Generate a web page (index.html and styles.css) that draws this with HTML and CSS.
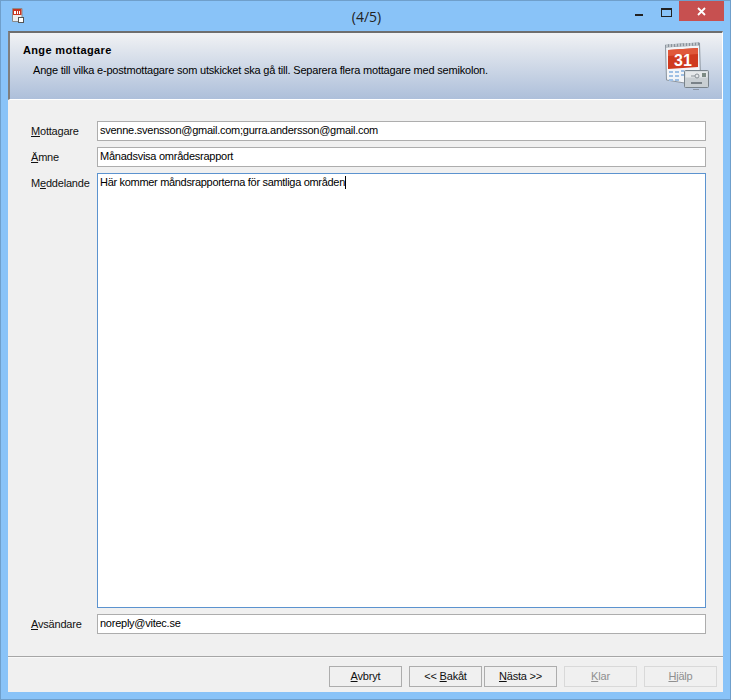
FILE: index.html
```html
<!DOCTYPE html>
<html lang="sv">
<head>
<meta charset="utf-8">
<title>(4/5)</title>
<link rel="stylesheet" href="styles.css">
</head>
<body>
<div class="window">
  <div class="titlebar">
    <svg class="app-icon" width="12" height="16" viewBox="0 0 12 16">
      <path d="M0.500 0.500h9.500v12l-2 1H0.500z" fill="#eceef0" stroke="#8a8a8a"/>
      <rect x="1" y="1" width="8.500" height="6" fill="#c9331f"/>
      <path d="M2 3h2v3H2zM5 3h1v3H5zM7 3h1v3H7z" fill="#fff"/>
      <rect x="6.500" y="9.500" width="5" height="5" fill="#fff" stroke="#555"/>
    </svg>
    <div class="title">(4/5)</div>
    <div class="controls">
      <div class="ctl ctl-min"><span class="min"></span></div>
      <div class="ctl"><span class="max"></span></div>
      <div class="close">
        <svg width="9" height="9" viewBox="0 0 9 9"><path d="M1 1l7 7M8 1L1 8" stroke="#fff" stroke-width="1.800"/></svg>
      </div>
    </div>
  </div>
  <div class="client">
    <header class="banner">
      <div class="banner-text">
        <h1>Ange mottagare</h1>
        <p>Ange till vilka e-postmottagare som utskicket ska gå till. Separera flera mottagare med semikolon.</p>
      </div>
      <svg class="banner-icon" width="46" height="50" viewBox="0 0 46 50">
        <path d="M2.500 4l34-2 1 36-4 6-30-5z" fill="#f3f5f8" stroke="#8b949e"/>
        <path d="M3 3.500l33-2v3L3 6.500z" fill="#8a939c"/>
        <path d="M4 3v3M7 3v3M10 3v3M13 2.500v3M16 2.500v3M19 2.500v3M22 2v3M25 2v3M28 2v3M31 1.500v3M34 1.500v3" stroke="#f4f6f8"/>
        <path d="M5 9l30-2v19L5 28z" fill="#cf3a1f"/>
        <path d="M5 9l30-2v6L5 15z" fill="#e0583a"/>
        <text x="20" y="25" class="cal-num">31</text>
        <g fill="#9fc0e4">
          <rect x="6" y="30" width="4" height="2"/><rect x="12" y="30" width="4" height="2"/><rect x="18" y="29" width="3" height="2"/>
          <rect x="6" y="34" width="4" height="2"/><rect x="12" y="34" width="4" height="2"/><rect x="18" y="33" width="3" height="2"/>
          <rect x="6" y="38" width="4" height="2"/><rect x="12" y="38" width="4" height="2"/>
        </g>
        <rect x="21.500" y="29.500" width="24" height="17" rx="1" fill="#c9cfd3" stroke="#79838b"/>
        <rect x="22.500" y="30.500" width="22" height="6" fill="#e6e9eb"/>
        <rect x="39" y="32" width="4" height="4" fill="#7d8b84"/>
        <circle cx="34" cy="35" r="2" fill="none" stroke="#8a9298"/>
        <path d="M28 35h4" stroke="#8a9298"/>
        <rect x="28" y="41" width="11" height="2" fill="#7a8288"/>
        <rect x="30" y="48" width="6" height="1" fill="#8c97a6"/>
      </svg>
    </header>
    <form class="form">
      <label class="lbl"><u>M</u>ottagare</label>
      <div class="field">svenne.svensson@gmail.com;gurra.andersson@gmail.com</div>
      <label class="lbl"><u>Ä</u>mne</label>
      <div class="field">Månadsvisa områdesrapport</div>
      <label class="lbl">M<u>e</u>ddelande</label>
      <div class="field area">Här kommer måndsrapporterna för samtliga områden<span class="caret"></span></div>
      <label class="lbl"><u>A</u>vsändare</label>
      <div class="field">noreply@vitec.se</div>
    </form>
    <footer class="footer">
      <button type="button" class="btn btn-gap"><u>A</u>vbryt</button>
      <button type="button" class="btn btn-near">&lt;&lt; <u>B</u>akåt</button>
      <button type="button" class="btn btn-gap"><u>N</u>ästa &gt;&gt;</button>
      <button type="button" class="btn btn-gap off" disabled><u>K</u>lar</button>
      <button type="button" class="btn off" disabled><u>H</u>jälp</button>
    </footer>
  </div>
</div>
</body>
</html>
```
FILE: styles.css
```css
* { box-sizing: border-box; }
html, body { margin: 0; padding: 0; }
body { width: 731px; height: 700px; overflow: hidden; font: 11px "Liberation Sans", Arial, sans-serif; color: #000; }
.window { width: 731px; height: 700px; display: flex; flex-direction: column; background: #89c3f8; border: 1px solid #6f9fcb; padding: 0 7px 7px; }
.titlebar { height: 30px; flex: none; display: flex; align-items: flex-start; position: relative; }
.app-icon { margin: 7px 0 0 4px; }
.title { position: absolute; left: 2px; right: 0; top: 8px; text-align: center; font: 14px "Open Sans", "Liberation Sans", sans-serif; line-height: 16px; color: #222; }
.controls { margin-left: auto; display: flex; position: relative; margin-right: -1px; }
.ctl { width: 26px; height: 20px; display: flex; align-items: center; justify-content: center; }
.ctl-min { margin-right: 1px; }
.min { width: 8px; height: 2px; background: #222; margin-top: 8px; }
.max { width: 11px; height: 9px; border: 1px solid #222; border-top-width: 2px; margin-top: 2px; }
.close { width: 45px; height: 20px; background: #c75050; display: flex; align-items: center; justify-content: center; }
.client { flex: 1; display: flex; flex-direction: column; background: #f0f0f0; min-height: 0; }
.banner { height: 69px; flex: none; display: flex; justify-content: space-between; background: linear-gradient(#f1f2f4, #adbfda); border-top: 2px solid #6e6e6e; border-left: 2px solid #7f7f7f; border-right: 1px solid #fff; border-bottom: 1px solid #fff; }
.banner-text { padding: 10px 0 0 13px; }
.banner h1 { margin: 0; font: bold 11px/14px "Liberation Sans", Arial, sans-serif; letter-spacing: .35px; }
.banner p { margin: 6px 0 0 10px; line-height: 14px; letter-spacing: -.2px; }
.banner-icon { margin: 8px 13px 0 0; }
.cal-num { font: bold 16px "Liberation Sans", Arial, sans-serif; fill: #fff; text-anchor: middle; }
.form { flex: 1; min-height: 0; display: grid; grid-template-columns: 66px 609px; grid-template-rows: 20px 20px 1fr 20px; gap: 6px 0; padding: 21px 17px 22px 23px; align-items: start; }
.lbl { line-height: 20px; color: #111; letter-spacing: -.2px; }
.field { height: 20px; border: 1px solid #adadad; background: #fff; line-height: 17px; padding-left: 2px; color: #000; white-space: nowrap; letter-spacing: -.25px; }
.area { height: 100%; border-color: #5c93cf; padding-top: 0; line-height: 16px; letter-spacing: -.31px; }
.caret { display: inline-block; width: 1px; height: 13px; background: #000; vertical-align: -3px; }
.footer { height: 36px; flex: none; display: flex; align-items: flex-start; padding: 9px 6px 0 0; justify-content: flex-end; border-top: 1px solid #a6a6a6; box-shadow: inset 0 1px 0 #f8f8f8; }
.btn { width: 73px; height: 21px; padding: 0; font: inherit; line-height: 19px; letter-spacing: -.2px; background: #f0f0f0; border: 1px solid #adadad; color: #111; }
.btn-gap { margin-right: 7px; }
.btn-near { margin-right: 2px; }
.off { border-color: #d9d9d9; color: #8f8f8f; }
```
